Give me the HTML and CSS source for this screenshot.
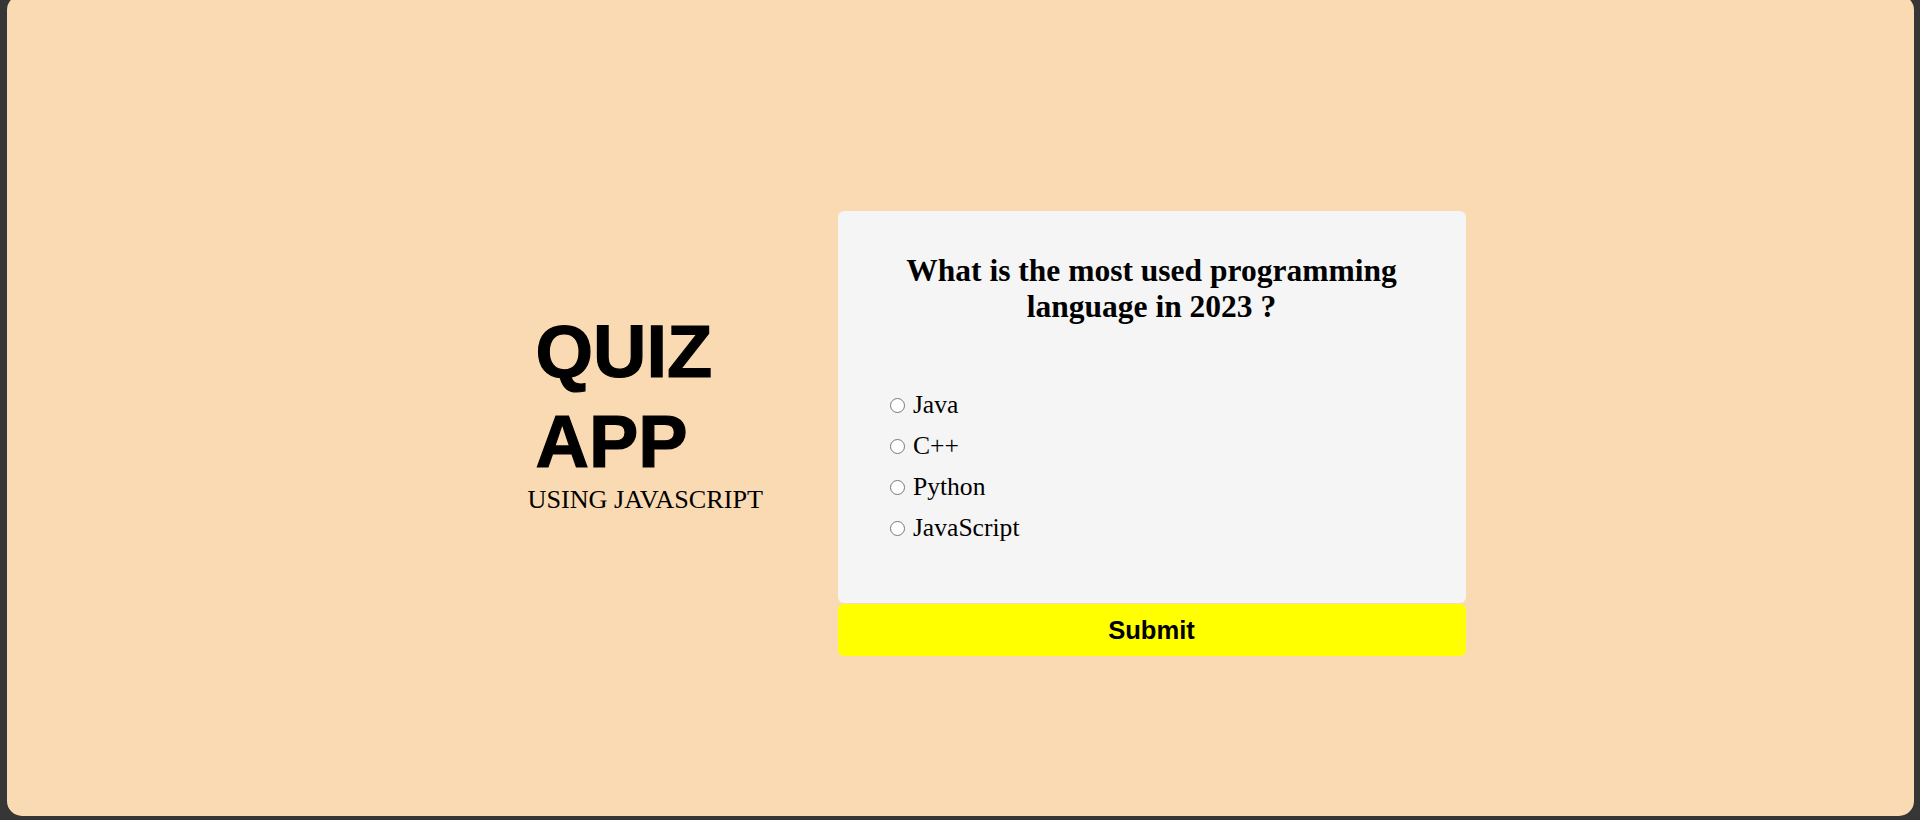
FILE: index.html
```html
<!DOCTYPE html>
<html lang="en">
<head>
<meta charset="utf-8">
<title>Quiz App</title>
<link rel="stylesheet" href="styles.css">
</head>
<body>
<main class="app">
  <div class="row">
    <div class="brand">
      <h1 class="brand-title">QUIZ<br>APP</h1>
      <p class="brand-sub">USING JAVASCRIPT</p>
    </div>
    <div class="quiz">
      <div class="quiz-card">
        <h2 class="question">What is the most used programming language in 2023 ?</h2>
        <div class="options">
          <div class="option"><input type="radio" name="answer" id="a"> <label for="a">Java</label></div>
          <div class="option"><input type="radio" name="answer" id="b"> <label for="b">C++</label></div>
          <div class="option"><input type="radio" name="answer" id="c"> <label for="c">Python</label></div>
          <div class="option"><input type="radio" name="answer" id="d"> <label for="d">JavaScript</label></div>
        </div>
      </div>
      <button class="submit" type="button">Submit</button>
    </div>
  </div>
</main>
</body>
</html>
```
FILE: styles.css
```css
html, body {
  margin: 0;
  height: 820px;
  overflow: hidden;
}
body {
  background: #363636;
  font-family: "Liberation Serif", "Times New Roman", serif;
  color: #000;
}
.app {
  box-sizing: border-box;
  margin: -5px 6px 0 7px;
  height: 821px;
  background: #fadab2;
  border-radius: 15px;
  padding-top: 216px;
}
.row {
  display: flex;
  align-items: center;
  justify-content: center;
  padding-left: 72px;
}
.brand {
  width: 310px;
  margin-bottom: 46px;
}
.brand-title {
  margin: 0;
  padding-left: 8px;
  font-family: "Liberation Sans", Arial, sans-serif;
  font-weight: bold;
  font-size: 74px;
  line-height: 90px;
  -webkit-text-stroke: 1.2px #000;
}
.brand-sub {
  margin: -2px 0 0;
  font-size: 26.2px;
}
.quiz {
  width: 628px;
  display: flex;
  flex-direction: column;
}
.quiz-card {
  background: #f5f5f5;
  border-radius: 6px;
  padding: 42px 20px 55px 47px;
}
.question {
  margin: 0 0 59px -27px;
  font-size: 31.5px;
  font-weight: bold;
  line-height: 36px;
  text-align: center;
}
.option {
  font-size: 25.6px;
  line-height: 41px;
}
.option input {
  width: 15px;
  height: 15px;
  margin: 3px 2px 0 5px;
}
.submit {
  margin-top: 1px;
  height: 52px;
  border: none;
  border-radius: 6px;
  background: #ffff00;
  font-family: "Liberation Sans", Arial, sans-serif;
  font-weight: bold;
  font-size: 25.6px;
  color: #000;
  padding: 0;
}
```
